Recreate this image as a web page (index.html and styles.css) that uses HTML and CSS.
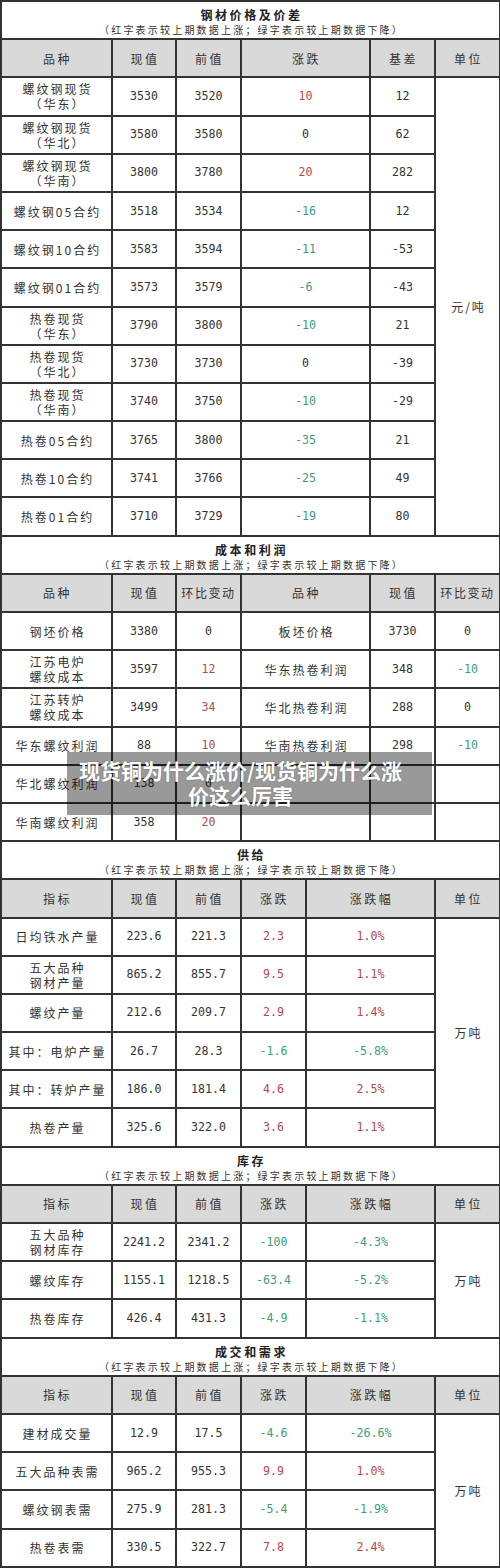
FILE: index.html
```html
<!DOCTYPE html>
<html lang="zh-CN">
<head>
<meta charset="utf-8">
<title>钢材价格及价差</title>
<link rel="stylesheet" href="styles.css">
</head>
<body>
<div class="page">
<table class="sheet">
  <colgroup>
    <col class="c-name"><col class="c-a"><col class="c-b"><col class="c-c"><col class="c-d"><col class="c-e"><col class="c-f">
  </colgroup>
  <tbody>
    <tr class="title"><td colspan="7"><div class="t-main">钢材价格及价差</div><div class="t-sub">（红字表示较上期数据上涨；绿字表示较上期数据下降）</div></td></tr>
    <tr class="head"><td>品种</td><td>现值</td><td>前值</td><td colspan="2">涨跌</td><td>基差</td><td>单位</td></tr>
    <tr><td>螺纹钢现货<br>（华东）</td><td class="n">3530</td><td class="n">3520</td><td class="n up" colspan="2">10</td><td class="n">12</td><td class="unit" rowspan="12">元/吨</td></tr>
    <tr><td>螺纹钢现货<br>（华北）</td><td class="n">3580</td><td class="n">3580</td><td class="n" colspan="2">0</td><td class="n">62</td></tr>
    <tr><td>螺纹钢现货<br>（华南）</td><td class="n">3800</td><td class="n">3780</td><td class="n up" colspan="2">20</td><td class="n">282</td></tr>
    <tr><td>螺纹钢05合约</td><td class="n">3518</td><td class="n">3534</td><td class="n down" colspan="2">-16</td><td class="n">12</td></tr>
    <tr><td>螺纹钢10合约</td><td class="n">3583</td><td class="n">3594</td><td class="n down" colspan="2">-11</td><td class="n">-53</td></tr>
    <tr><td>螺纹钢01合约</td><td class="n">3573</td><td class="n">3579</td><td class="n down" colspan="2">-6</td><td class="n">-43</td></tr>
    <tr><td>热卷现货<br>（华东）</td><td class="n">3790</td><td class="n">3800</td><td class="n down" colspan="2">-10</td><td class="n">21</td></tr>
    <tr><td>热卷现货<br>（华北）</td><td class="n">3730</td><td class="n">3730</td><td class="n" colspan="2">0</td><td class="n">-39</td></tr>
    <tr><td>热卷现货<br>（华南）</td><td class="n">3740</td><td class="n">3750</td><td class="n down" colspan="2">-10</td><td class="n">-29</td></tr>
    <tr><td>热卷05合约</td><td class="n">3765</td><td class="n">3800</td><td class="n down" colspan="2">-35</td><td class="n">21</td></tr>
    <tr><td>热卷10合约</td><td class="n">3741</td><td class="n">3766</td><td class="n down" colspan="2">-25</td><td class="n">49</td></tr>
    <tr><td>热卷01合约</td><td class="n">3710</td><td class="n">3729</td><td class="n down" colspan="2">-19</td><td class="n">80</td></tr>
  </tbody>
  <tbody>
    <tr class="title"><td colspan="7"><div class="t-main">成本和利润</div><div class="t-sub">（红字表示较上期数据上涨；绿字表示较上期数据下降）</div></td></tr>
    <tr class="head"><td>品种</td><td>现值</td><td class="tight">环比变动</td><td colspan="2">品种</td><td>现值</td><td class="tight">环比变动</td></tr>
    <tr><td>钢坯价格</td><td class="n">3380</td><td class="n">0</td><td colspan="2">板坯价格</td><td class="n">3730</td><td class="n">0</td></tr>
    <tr><td>江苏电炉<br>螺纹成本</td><td class="n">3597</td><td class="n up">12</td><td colspan="2">华东热卷利润</td><td class="n">348</td><td class="n down">-10</td></tr>
    <tr><td>江苏转炉<br>螺纹成本</td><td class="n">3499</td><td class="n up">34</td><td colspan="2">华北热卷利润</td><td class="n">288</td><td class="n">0</td></tr>
    <tr><td>华东螺纹利润</td><td class="n">88</td><td class="n up">10</td><td colspan="2">华南热卷利润</td><td class="n">298</td><td class="n down">-10</td></tr>
    <tr><td>华北螺纹利润</td><td class="n">138</td><td class="n">0</td><td colspan="2"></td><td></td><td></td></tr>
    <tr><td>华南螺纹利润</td><td class="n">358</td><td class="n up">20</td><td colspan="2"></td><td></td><td></td></tr>
  </tbody>
  <tbody>
    <tr class="title"><td colspan="7"><div class="t-main">供给</div><div class="t-sub">（红字表示较上期数据上涨；绿字表示较上期数据下降）</div></td></tr>
    <tr class="head"><td>指标</td><td>现值</td><td>前值</td><td>涨跌</td><td colspan="2">涨跌幅</td><td>单位</td></tr>
    <tr><td>日均铁水产量</td><td class="n">223.6</td><td class="n">221.3</td><td class="n up">2.3</td><td class="n up" colspan="2">1.0%</td><td class="unit" rowspan="6">万吨</td></tr>
    <tr><td>五大品种<br>钢材产量</td><td class="n">865.2</td><td class="n">855.7</td><td class="n up">9.5</td><td class="n up" colspan="2">1.1%</td></tr>
    <tr><td>螺纹产量</td><td class="n">212.6</td><td class="n">209.7</td><td class="n up">2.9</td><td class="n up" colspan="2">1.4%</td></tr>
    <tr><td>其中：电炉产量</td><td class="n">26.7</td><td class="n">28.3</td><td class="n down">-1.6</td><td class="n down" colspan="2">-5.8%</td></tr>
    <tr><td>其中：转炉产量</td><td class="n">186.0</td><td class="n">181.4</td><td class="n up">4.6</td><td class="n up" colspan="2">2.5%</td></tr>
    <tr><td>热卷产量</td><td class="n">325.6</td><td class="n">322.0</td><td class="n up">3.6</td><td class="n up" colspan="2">1.1%</td></tr>
  </tbody>
  <tbody>
    <tr class="title"><td colspan="7"><div class="t-main">库存</div><div class="t-sub">（红字表示较上期数据上涨；绿字表示较上期数据下降）</div></td></tr>
    <tr class="head"><td>指标</td><td>现值</td><td>前值</td><td>涨跌</td><td colspan="2">涨跌幅</td><td>单位</td></tr>
    <tr><td>五大品种<br>钢材库存</td><td class="n">2241.2</td><td class="n">2341.2</td><td class="n down">-100</td><td class="n down" colspan="2">-4.3%</td><td class="unit" rowspan="3">万吨</td></tr>
    <tr><td>螺纹库存</td><td class="n">1155.1</td><td class="n">1218.5</td><td class="n down">-63.4</td><td class="n down" colspan="2">-5.2%</td></tr>
    <tr><td>热卷库存</td><td class="n">426.4</td><td class="n">431.3</td><td class="n down">-4.9</td><td class="n down" colspan="2">-1.1%</td></tr>
  </tbody>
  <tbody>
    <tr class="title"><td colspan="7"><div class="t-main">成交和需求</div><div class="t-sub">（红字表示较上期数据上涨；绿字表示较上期数据下降）</div></td></tr>
    <tr class="head"><td>指标</td><td>现值</td><td>前值</td><td>涨跌</td><td colspan="2">涨跌幅</td><td>单位</td></tr>
    <tr><td>建材成交量</td><td class="n">12.9</td><td class="n">17.5</td><td class="n down">-4.6</td><td class="n down" colspan="2">-26.6%</td><td class="unit" rowspan="4">万吨</td></tr>
    <tr><td>五大品种表需</td><td class="n">965.2</td><td class="n">955.3</td><td class="n up">9.9</td><td class="n up" colspan="2">1.0%</td></tr>
    <tr><td>螺纹钢表需</td><td class="n">275.9</td><td class="n">281.3</td><td class="n down">-5.4</td><td class="n down" colspan="2">-1.9%</td></tr>
    <tr><td>热卷表需</td><td class="n">330.5</td><td class="n">322.7</td><td class="n up">7.8</td><td class="n up" colspan="2">2.4%</td></tr>
  </tbody>
</table>
<div class="caption">现货铜为什么涨价/现货铜为什么涨<br>价这么厉害</div>
</div>
</body>
</html>
```

FILE: styles.css
```css
* { box-sizing: border-box; }

body {
  margin: 0;
  background: #fff;
}

.page {
  position: relative;
  width: 500px;
}

.sheet {
  border-collapse: collapse;
  table-layout: fixed;
  width: 499px;
  font-family: "Noto Sans CJK SC", sans-serif;
  color: #333;
}

.c-name { width: 111px; }
.c-a { width: 64px; }
.c-b { width: 65px; }
.c-c { width: 65px; }
.c-d { width: 64px; }
.c-e { width: 65px; }
.c-f { width: 65px; }

.sheet tr { height: 38.2px; }

.sheet td {
  border: 2px solid #333;
  padding: 0 0 0 2px;
  text-align: center;
  vertical-align: middle;
  font-size: 12px;
  line-height: 15px;
  letter-spacing: 2px;
  white-space: nowrap;
  overflow: hidden;
}

.title td {
  vertical-align: top;
  padding-top: 5px;
  background: #fff;
}

.t-main {
  font-weight: bold;
  font-size: 12px;
  line-height: 16px;
  letter-spacing: 2.6px;
  color: #222;
}

.t-sub {
  font-size: 10px;
  line-height: 14px;
  letter-spacing: 2.2px;
  color: #333;
}

.head td {
  background: #d9d9d9;
  letter-spacing: 2.5px;
}

.head td.tight {
  letter-spacing: 1.6px;
  padding-left: 0;
}

.sheet td.n {
  font-family: "DejaVu Sans Mono", monospace;
  font-size: 11.6px;
  letter-spacing: 0;
  padding-left: 0;
}

.sheet td.up { color: #b4494d; }
.sheet td.down { color: #3f9c7b; }

.unit {
  letter-spacing: 2px;
}

.caption {
  position: absolute;
  left: 67px;
  top: 752px;
  width: 365px;
  height: 63px;
  padding: 6px 28px 0 10px;
  background: rgba(0, 0, 0, 0.4);
  color: #fff;
  font-family: "Noto Sans CJK SC", sans-serif;
  font-weight: bold;
  font-size: 21px;
  line-height: 25px;
  text-align: center;
  white-space: nowrap;
  text-shadow: 0 0 2px rgba(0, 0, 0, 0.25);
}
```
